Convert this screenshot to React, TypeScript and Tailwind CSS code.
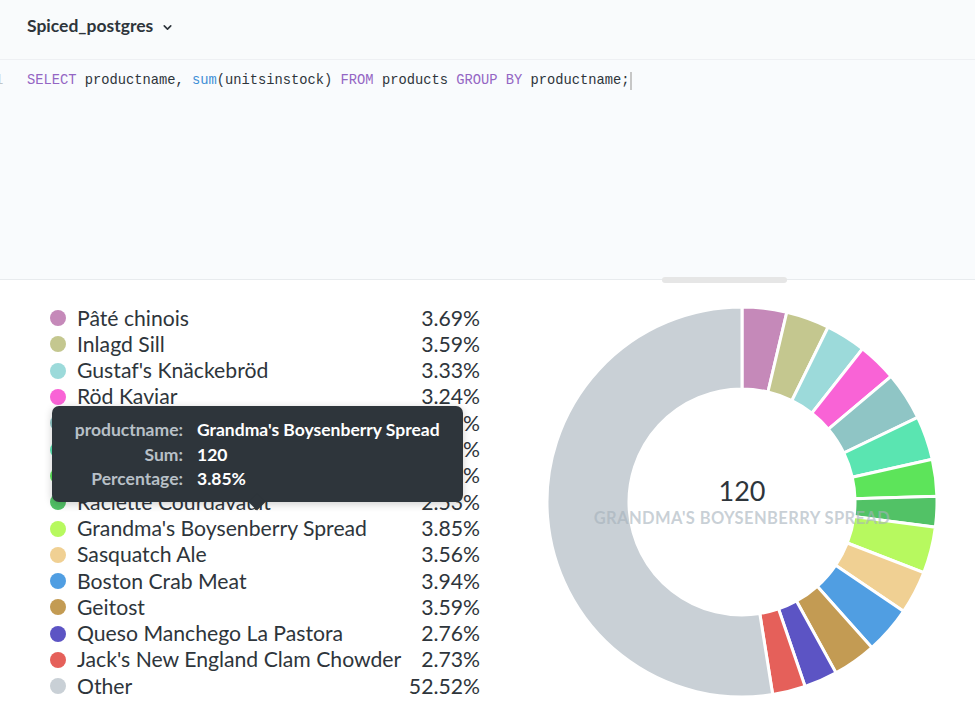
import React from "react";
import { ChevronDown } from "lucide-react";

const rows = [
  { name: "Pâté chinois", pct: 3.69, color: "#c589b9" },
  { name: "Inlagd Sill", pct: 3.59, color: "#c4c78f" },
  { name: "Gustaf's Knäckebröd", pct: 3.33, color: "#9cdada" },
  { name: "Röd Kaviar", pct: 3.24, color: "#f963d6" },
  { name: "Rhönbräu Klosterbier", pct: 4.01, color: "#8fc5c5" },
  { name: "Sirop d'érable", pct: 3.62, color: "#5ae5b1" },
  { name: "Spegesild", pct: 3.05, color: "#5de45a" },
  { name: "Raclette Courdavault", pct: 2.53, color: "#52c266" },
  { name: "Grandma's Boysenberry Spread", pct: 3.85, color: "#b7f95f" },
  { name: "Sasquatch Ale", pct: 3.56, color: "#f0d093" },
  { name: "Boston Crab Meat", pct: 3.94, color: "#509ee2" },
  { name: "Geitost", pct: 3.59, color: "#c39b53" },
  { name: "Queso Manchego La Pastora", pct: 2.76, color: "#5c54c4" },
  { name: "Jack's New England Clam Chowder", pct: 2.73, color: "#e5605a" },
  { name: "Other", pct: 52.52, color: "#c9d0d6" },
];

function arc(cx: number, cy: number, ro: number, ri: number, a0: number, a1: number) {
  const p = (r: number, a: number) => {
    const t = (a - 90) * (Math.PI / 180);
    return `${(cx + r * Math.cos(t)).toFixed(2)} ${(cy + r * Math.sin(t)).toFixed(2)}`;
  };
  const large = a1 - a0 > 180 ? 1 : 0;
  return `M ${p(ro, a0)} A ${ro} ${ro} 0 ${large} 1 ${p(ro, a1)} L ${p(ri, a1)} A ${ri} ${ri} 0 ${large} 0 ${p(ri, a0)} Z`;
}

function Donut() {
  const total = rows.reduce((s, r) => s + r.pct, 0);
  let acc = 0;
  return (
    <svg width="400" height="400" viewBox="0 0 400 400">
      {rows.map((r) => {
        const a0 = (acc / total) * 360;
        acc += r.pct;
        const a1 = (acc / total) * 360;
        return (
          <path
            key={r.name}
            d={arc(200, 200, 195, 113, a0, a1)}
            fill={r.color}
            stroke="#ffffff"
            strokeWidth="3"
          />
        );
      })}
      <text x="200" y="199" textAnchor="middle" fontFamily="Lato, sans-serif" fontSize="27" fill="#2e353b">
        120
      </text>
      {/* semi-transparent so it fades into the ring at both ends */}
      <text
        x="200"
        y="222"
        textAnchor="middle"
        fontFamily="Lato, sans-serif"
        fontSize="16.5"
        fontWeight="700"
        letterSpacing="0.4"
        fill="#a5b1bb"
        fillOpacity="0.6"
      >
        GRANDMA'S BOYSENBERRY SPREAD
      </text>
    </svg>
  );
}

export default function App() {
  return (
    <div className="w-[975px] h-[717px] overflow-hidden bg-white text-[#2e353b]" style={{ fontFamily: "Lato, 'Noto Sans', sans-serif" }}>
      {/* header */}
      <div className="h-[60px] bg-[#f9fbfc] border-b border-[#eef0f3] flex items-center pl-[27px] pb-[6px]">
        <span className="text-[17.5px] font-bold text-[#2e353b]">Spiced_postgres</span>
        <ChevronDown size={13} strokeWidth={3} className="ml-[8px] mt-[2px] text-[#2e353b]" />
      </div>

      {/* editor */}
      <div className="h-[220px] bg-[#f9fbfd] border-b border-[#e8ebee] relative pt-[11px]">
        <div className="flex items-center h-[20px] text-[13.75px]" style={{ fontFamily: "'Liberation Mono', monospace" }}>
          <span className="w-[27px] text-[#c0c4c8] -indent-[5px]">1</span>
          <span className="whitespace-pre text-[#2e353b]">
            <span className="text-[#9466c4]">SELECT</span> productname, <span className="text-[#3e8fd6]">sum</span>(unitsinstock){" "}
            <span className="text-[#9466c4]">FROM</span> products <span className="text-[#9466c4]">GROUP</span>{" "}
            <span className="text-[#9466c4]">BY</span> productname;
          </span>
          <span className="w-[2px] h-[18px] bg-[#c7c7c7] ml-[1px]" />
        </div>
        <div className="absolute left-[662px] bottom-[-4px] w-[125px] h-[6px] rounded-full bg-[#e6e6e6]" />
      </div>

      {/* results */}
      <div className="flex relative">
        <div className="w-[480px] pl-[50px] pt-[25px]">
          {rows.map((r) => (
            <div key={r.name} className="h-[26.3px] flex items-center text-[21.2px] leading-none">
              <span className="w-[16px] h-[16px] rounded-full shrink-0" style={{ backgroundColor: r.color }} />
              <span className="ml-[11px] flex-1 whitespace-nowrap">{r.name}</span>
              <span className="ml-[6px]">{r.pct.toFixed(2)}%</span>
            </div>
          ))}
        </div>
        <div className="pl-[62px] pt-[22px]">
          <Donut />
        </div>

        {/* tooltip */}
        <div className="absolute left-[52px] top-[126px] w-[411px] h-[96px] rounded-[7px] bg-[#2e353b] shadow-[0_2px_8px_rgba(0,0,0,0.2)] pt-[12px] text-[17.5px] font-bold">
          {[
            ["productname:", "Grandma's Boysenberry Spread"],
            ["Sum:", "120"],
            ["Percentage:", "3.85%"],
          ].map(([k, v]) => (
            <div key={k} className="flex h-[24.5px] items-center">
              <span className="w-[131px] text-right text-[#b8c0c7]">{k}</span>
              <span className="ml-[14px] text-white">{v}</span>
            </div>
          ))}
          <div className="absolute left-[199px] bottom-[-6px] w-[12px] h-[12px] bg-[#2e353b] rotate-45" />
        </div>
      </div>
    </div>
  );
}
